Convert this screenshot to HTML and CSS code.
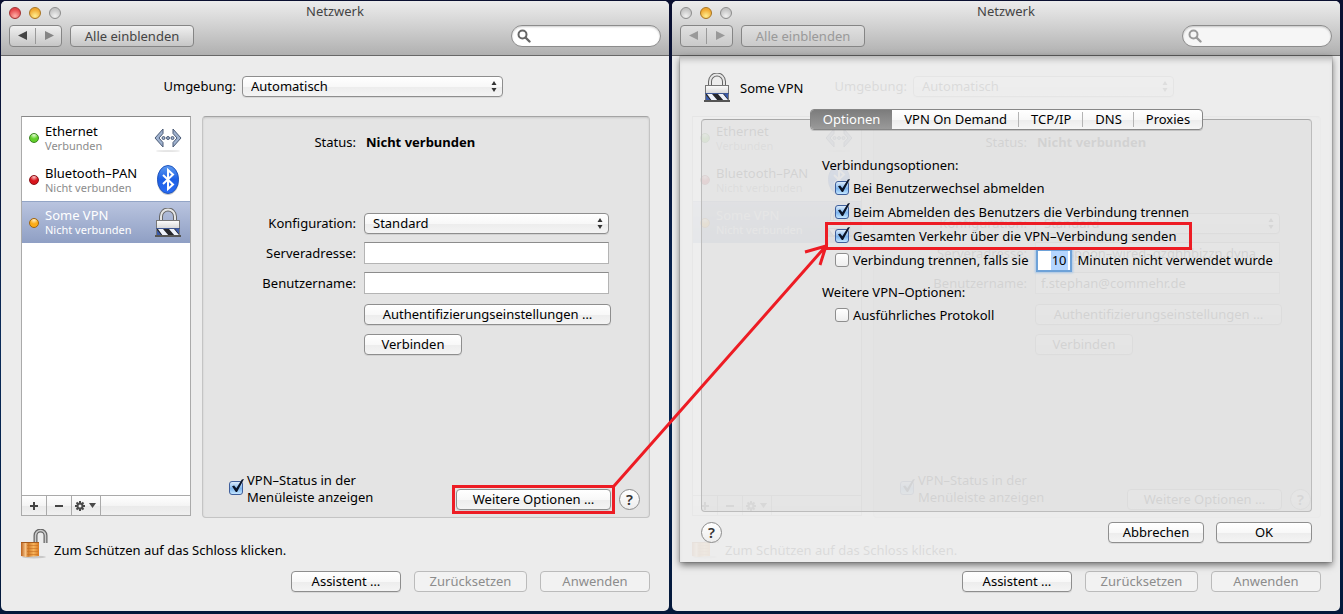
FILE: index.html
```html
<!DOCTYPE html>
<html lang="de">
<head>
    <meta charset="UTF-8">
    <meta name="viewport" content="width=device-width, initial-scale=1.0">
    <title>Netzwerk</title>
    <link rel="stylesheet" href="styles.css">
</head>
<body>
    <!-- shared icons -->
    <svg class="icon-defs" aria-hidden="true">
        <defs>
            <linearGradient id="metal" x1="0" y1="0" x2="0" y2="1">
                <stop offset="0" stop-color="#fdfdfd"/>
                <stop offset="1" stop-color="#b4b4b4"/>
            </linearGradient>
            <linearGradient id="blue" x1="0" y1="0" x2="0" y2="1">
                <stop offset="0" stop-color="#5f9cf0"/>
                <stop offset="0.5" stop-color="#1c5fe6"/>
                <stop offset="1" stop-color="#2a6cf4"/>
            </linearGradient>
            <linearGradient id="gold" x1="0" y1="0" x2="1" y2="0">
                <stop offset="0" stop-color="#b9601c"/>
                <stop offset="0.25" stop-color="#f8c487"/>
                <stop offset="0.4" stop-color="#d07a28"/>
                <stop offset="0.7" stop-color="#f7b45c"/>
                <stop offset="1" stop-color="#d9781f"/>
            </linearGradient>
        </defs>
        <symbol id="icon-ethernet" viewBox="0 0 30 30">
            <path d="M10 6L2 15l8 9v-4.500L6 15l4-4.500zM20 6l8 9-8 9v-4.500L24 15l-4-4.500z" fill="#9fb2cf" stroke="#4b5b76"/>
            <g fill="#9fb2cf" stroke="#4b5b76"><circle cx="10.500" cy="15" r="1.500"/><circle cx="15" cy="15" r="1.500"/><circle cx="19.500" cy="15" r="1.500"/></g>
            <ellipse cx="15" cy="28" rx="12" ry="1" fill="#000" opacity="0.1"/>
        </symbol>
        <symbol id="icon-bluetooth" viewBox="0 0 30 30">
            <ellipse cx="15" cy="15.500" rx="11" ry="14.500" fill="#999" opacity="0.5"/>
            <ellipse cx="15" cy="14.500" rx="10.500" ry="14" fill="url(#blue)" stroke="#1f55c0"/>
            <path d="M10 10l10 9.500-5 4.500V5l5 4.500L10 19" fill="none" stroke="#fff" stroke-width="2"/>
        </symbol>
        <symbol id="icon-vpn" viewBox="0 0 28 30">
            <path d="M7 13V8.500a7 7 0 0 1 14 0V13" fill="none" stroke="#666" stroke-width="4"/>
            <path d="M7 13V8.500a7 7 0 0 1 14 0V13" fill="none" stroke="#e6e6e6" stroke-width="2"/>
            <rect x="2.500" y="12.500" width="23" height="15" fill="url(#metal)" stroke="#777"/>
            <rect x="3" y="20" width="22" height="8" fill="#26272c"/>
            <path d="M4 21h5l6 7H9zM15 21h5l5 6v1h-4z" fill="#eef2fa"/>
            <path d="M3 22l5 6H3z" fill="#3c5cab"/>
            <path d="M21 21h4v5z" fill="#3c5cab"/>
            <path d="M2 20.500h24" stroke="#3e5792"/>
            <rect x="1" y="27" width="26" height="2" fill="#555"/>
        </symbol>
        <symbol id="icon-unlocked" viewBox="0 0 28 30">
            <ellipse cx="13" cy="28" rx="12" ry="1.500" fill="#000" opacity="0.15"/>
            <path d="M14.500 15V6.500a5 5 0 0 1 10 0V14" fill="none" stroke="#666" stroke-width="4"/>
            <path d="M14.500 15V6.500a5 5 0 0 1 10 0V14" fill="none" stroke="#ccc" stroke-width="1.500"/>
            <path d="M0 14l3-1h15v14l-13 1-5-1z" fill="url(#gold)"/>
            <path d="M6 16.500h11M6 19.500h11M6 22.500h11M6 25.500h11" stroke="#c76f22" opacity="0.6"/>
            <path d="M0 13.500h18" stroke="#a65a1b"/>
        </symbol>
        <symbol id="icon-search" viewBox="0 0 14 14">
            <circle cx="5.500" cy="5.500" r="4" fill="none" stroke="currentColor" stroke-width="2"/>
            <path d="M8.500 8.500l4 4" stroke="currentColor" stroke-width="2.400" stroke-linecap="round"/>
        </symbol>
        <symbol id="icon-updown" viewBox="0 0 6 12">
            <path d="M3 0l2.500 4h-5zM3 11L.5 7h5z" fill="currentColor"/>
        </symbol>
        <symbol id="icon-gear" viewBox="0 0 24 12">
            <path d="M6 1v10M1 6h10M2.500 2.500l7 7M9.500 2.500l-7 7" stroke="#4a4a4a" stroke-width="2"/>
            <circle cx="6" cy="6" r="2.500" fill="#f4f4f4" stroke="#4a4a4a" stroke-width="2"/>
            <path d="M15 3h7l-3.500 5z" fill="#4a4a4a"/>
        </symbol>
        <symbol id="icon-back" viewBox="0 0 10 10"><path d="M9 0v9L0 4.500z" fill="currentColor"/></symbol>
        <symbol id="icon-forward" viewBox="0 0 10 10"><path d="M1 0v9l9-4.500z" fill="currentColor"/></symbol>
    </svg>

    <div class="desktop">
        <!-- main window -->
        <section class="window">
            <header class="titlebar">
                <div class="title-row">
                    <button class="light light-red" aria-label="Schließen"></button>
                    <button class="light light-yellow" aria-label="Minimieren"></button>
                    <button class="light" aria-label="Zoomen"></button>
                    <h1>Netzwerk</h1>
                </div>
                <div class="toolbar">
                    <div class="nav">
                        <button aria-label="Zurück"><svg><use href="#icon-back"/></svg></button>
                        <button aria-label="Vorwärts" class="dim"><svg><use href="#icon-forward"/></svg></button>
                    </div>
                    <button class="show-all">Alle einblenden</button>
                    <label class="search"><svg><use href="#icon-search"/></svg><input type="search" aria-label="Suchen"></label>
                </div>
            </header>
            <main class="content">
                <div class="location">
                    <label for="location">Umgebung:</label>
                    <span class="select"><select id="location"><option>Automatisch</option></select><svg><use href="#icon-updown"/></svg></span>
                </div>
                <div class="columns">
                    <div class="sidebar">
                        <ul class="services">
                            <li><i class="dot dot-green"></i><div><b>Ethernet</b><small>Verbunden</small></div><svg><use href="#icon-ethernet"/></svg></li>
                            <li><i class="dot dot-red"></i><div><b>Bluetooth–PAN</b><small>Nicht verbunden</small></div><svg><use href="#icon-bluetooth"/></svg></li>
                            <li class="selected"><i class="dot dot-yellow"></i><div><b>Some VPN</b><small>Nicht verbunden</small></div><svg><use href="#icon-vpn"/></svg></li>
                        </ul>
                        <div class="list-actions">
                            <button aria-label="Hinzufügen"><span class="plus"></span></button>
                            <button aria-label="Entfernen"><span class="minus"></span></button>
                            <button class="gear" aria-label="Aktionen"><svg><use href="#icon-gear"/></svg></button>
                        </div>
                    </div>
                    <div class="panel">
                        <div class="status"><span>Status:</span><strong>Nicht verbunden</strong></div>
                        <div class="fields">
                            <label for="config">Konfiguration:</label>
                            <span class="select"><select id="config"><option>Standard</option></select><svg><use href="#icon-updown"/></svg></span>
                            <label for="server">Serveradresse:</label>
                            <input type="text" id="server">
                            <label for="user">Benutzername:</label>
                            <input type="text" id="user">
                        </div>
                        <div class="field-buttons">
                            <button class="button auth">Authentifizierungseinstellungen …</button>
                            <button class="button">Verbinden</button>
                        </div>
                        <div class="panel-footer">
                            <input type="checkbox" id="menubar" checked>
                            <label for="menubar">VPN–Status in der<br>Menüleiste anzeigen</label>
                            <span class="more marked"><button class="button">Weitere Optionen …</button></span>
                            <button class="help" aria-label="Hilfe">?</button>
                        </div>
                    </div>
                </div>
                <div class="lock-row"><svg><use href="#icon-unlocked"/></svg><span>Zum Schützen auf das Schloss klicken.</span></div>
                <div class="actions">
                    <button class="button">Assistent …</button>
                    <button class="button" disabled>Zurücksetzen</button>
                    <button class="button" disabled>Anwenden</button>
                </div>
            </main>
        </section>

        <!-- window with the options sheet -->
        <section class="window blocked">
            <header class="titlebar">
                <div class="title-row">
                    <button class="light" aria-label="Schließen"></button>
                    <button class="light light-yellow" aria-label="Minimieren"></button>
                    <button class="light" aria-label="Zoomen"></button>
                    <h1>Netzwerk</h1>
                </div>
                <div class="toolbar">
                    <div class="nav">
                        <button aria-label="Zurück" disabled><svg><use href="#icon-back"/></svg></button>
                        <button aria-label="Vorwärts" disabled><svg><use href="#icon-forward"/></svg></button>
                    </div>
                    <button class="show-all" disabled>Alle einblenden</button>
                    <label class="search"><svg><use href="#icon-search"/></svg><input type="search" aria-label="Suchen" disabled></label>
                </div>
            </header>
            <div class="sheet-area">
                <main class="content" inert>
                    <div class="location">
                        <label for="location2">Umgebung:</label>
                        <span class="select"><select id="location2"><option>Automatisch</option></select><svg><use href="#icon-updown"/></svg></span>
                    </div>
                    <div class="columns">
                        <div class="sidebar">
                            <ul class="services">
                                <li><i class="dot dot-green"></i><div><b>Ethernet</b><small>Verbunden</small></div><svg><use href="#icon-ethernet"/></svg></li>
                                <li><i class="dot dot-red"></i><div><b>Bluetooth–PAN</b><small>Nicht verbunden</small></div><svg><use href="#icon-bluetooth"/></svg></li>
                                <li class="selected"><i class="dot dot-yellow"></i><div><b>Some VPN</b><small>Nicht verbunden</small></div><svg><use href="#icon-vpn"/></svg></li>
                            </ul>
                            <div class="list-actions">
                                <button aria-label="Hinzufügen"><span class="plus"></span></button>
                                <button aria-label="Entfernen"><span class="minus"></span></button>
                                <button class="gear" aria-label="Aktionen"><svg><use href="#icon-gear"/></svg></button>
                            </div>
                        </div>
                        <div class="panel">
                            <div class="status"><span>Status:</span><strong>Nicht verbunden</strong></div>
                            <div class="fields">
                                <label for="config2">Konfiguration:</label>
                                <span class="select"><select id="config2"><option>Standard</option></select><svg><use href="#icon-updown"/></svg></span>
                                <label for="server2">Serveradresse:</label>
                                <input type="text" id="server2" value="greyspoon–wired–gzghhbjzzn.dyna">
                                <label for="user2">Benutzername:</label>
                                <input type="text" id="user2" value="f.stephan@commehr.de">
                            </div>
                            <div class="field-buttons">
                                <button class="button auth">Authentifizierungseinstellungen …</button>
                                <button class="button">Verbinden</button>
                            </div>
                            <div class="panel-footer">
                                <input type="checkbox" id="menubar2" checked>
                                <label for="menubar2">VPN–Status in der<br>Menüleiste anzeigen</label>
                                <span class="more"><button class="button">Weitere Optionen …</button></span>
                                <button class="help" aria-label="Hilfe">?</button>
                            </div>
                        </div>
                    </div>
                    <div class="lock-row"><svg><use href="#icon-unlocked"/></svg><span>Zum Schützen auf das Schloss klicken.</span></div>
                    <div class="actions">
                        <button class="button">Assistent …</button>
                        <button class="button" disabled>Zurücksetzen</button>
                        <button class="button" disabled>Anwenden</button>
                    </div>
                </main>

                <div class="sheet" role="dialog" aria-label="Some VPN">
                    <div class="sheet-head"><svg><use href="#icon-vpn"/></svg><span>Some VPN</span></div>
                    <div class="tabs" role="tablist">
                        <button role="tab" class="active" aria-selected="true">Optionen</button>
                        <button role="tab">VPN On Demand</button>
                        <button role="tab">TCP/IP</button>
                        <button role="tab">DNS</button>
                        <button role="tab">Proxies</button>
                    </div>
                    <div class="options">
                        <h2>Verbindungsoptionen:</h2>
                        <div class="option"><input type="checkbox" id="opt1" checked><label for="opt1">Bei Benutzerwechsel abmelden</label></div>
                        <div class="option"><input type="checkbox" id="opt2" checked><label for="opt2">Beim Abmelden des Benutzers die Verbindung trennen</label></div>
                        <div class="option marked"><input type="checkbox" id="opt3" checked><label for="opt3">Gesamten Verkehr über die VPN–Verbindung senden</label></div>
                        <div class="option">
                            <input type="checkbox" id="opt4"><label for="opt4">Verbindung trennen, falls sie</label>
                            <span class="minutes"><input type="text" id="minutes" value="10"></span>
                            <label for="minutes">Minuten nicht verwendet wurde</label>
                        </div>
                        <h2>Weitere VPN–Optionen:</h2>
                        <div class="option"><input type="checkbox" id="opt5"><label for="opt5">Ausführliches Protokoll</label></div>
                    </div>
                    <div class="sheet-footer">
                        <button class="help" aria-label="Hilfe">?</button>
                        <button class="button">Abbrechen</button>
                        <button class="button">OK</button>
                    </div>
                </div>
            </div>
        </section>

        <svg class="arrow" aria-hidden="true">
            <path d="M614 486L826 246M805 252L826 246L820 265" fill="none" stroke="#ed1c24" stroke-width="3"/>
        </svg>
    </div>
</body>
</html>
```
FILE: styles.css
```css
* {
    box-sizing: border-box;
}
body {
    margin: 0;
    font-family: "Noto Sans", "Open Sans", sans-serif;
    font-size: 13px;
    line-height: 17px;
    color: #000;
}
button, input, select {
    font: inherit;
    color: inherit;
    margin: 0;
    padding: 0;
}
h1, h2 {
    margin: 0;
    font-size: 13px;
    font-weight: normal;
}
.icon-defs {
    position: absolute;
    width: 0;
    height: 0;
}
.desktop {
    position: relative;
    display: flex;
    gap: 3px;
    min-height: 100vh;
    padding: 1px 3px 3px 1px;
    background: linear-gradient(#0a0f30, #0a1a40 30%, #0b2c5a 55%, #03204a 80%, #04183a);
}
.window {
    flex: 1;
    display: flex;
    flex-direction: column;
    background: #ececec;
    border-radius: 5px;
}

/* title bar */
.titlebar {
    padding: 0 8px 8px;
    background: linear-gradient(#ececec, #cfcfcf 50%, #b0b0b0);
    border-bottom: 1px solid #686868;
    border-radius: 5px 5px 0 0;
}
.title-row {
    position: relative;
    display: flex;
    align-items: center;
    gap: 8px;
    height: 24px;
}
.title-row h1 {
    position: absolute;
    left: 0;
    right: 0;
    top: 2px;
    text-align: center;
    color: #444;
    pointer-events: none;
}
.light {
    width: 12px;
    height: 12px;
    border: 1px solid #8c8c8c;
    border-radius: 50%;
    background: radial-gradient(circle at 50% 80%, #f0f0f0, #c4c4c4 70%);
}
.light-red {
    border-color: #a03030;
    background: radial-gradient(circle at 50% 80%, #ffb0a8, #e4464a 70%);
}
.light-yellow {
    border-color: #a87420;
    background: radial-gradient(circle at 50% 80%, #ffee90, #f0a830 70%);
}
.toolbar {
    display: flex;
    gap: 8px;
}
.nav, .show-all {
    height: 22px;
    border: 1px solid #858585;
    border-radius: 4px;
    background: linear-gradient(#f0f0f0, #c6c6c6);
    color: #444;
}
.nav {
    display: flex;
    width: 53px;
    padding: 2px 0;
}
.nav button {
    flex: 1;
    display: flex;
    align-items: center;
    justify-content: center;
    border: 0;
    background: none;
}
.nav button + button {
    border-left: 1px solid #999;
}
.nav svg {
    width: 10px;
    height: 10px;
}
.nav .dim {
    color: #858585;
}
.show-all {
    width: 124px;
}
.search {
    display: flex;
    align-items: center;
    gap: 4px;
    width: 150px;
    height: 22px;
    margin-left: auto;
    padding: 0 5px;
    border: 1px solid #8c8c8c;
    border-radius: 11px;
    background: #fff;
    box-shadow: inset 0 1px 2px rgba(0, 0, 0, 0.2);
    color: #666;
}
.search svg {
    flex: none;
    width: 14px;
    height: 14px;
}
.search input {
    flex: 1;
    min-width: 0;
    border: 0;
    outline: 0;
    background: none;
}
.blocked .nav, .blocked .show-all {
    background: linear-gradient(#e0e0e0, #cacaca);
    color: #999;
}
.blocked .search {
    background: #f6f6f6;
    color: #999;
}

/* window content */
.content {
    flex: 1;
    display: flex;
    flex-direction: column;
    padding: 20px 19px 19px 20px;
}
.location {
    display: grid;
    grid-template-columns: 215px 261px;
    column-gap: 6px;
    text-align: right;
    align-items: center;
    margin-bottom: 19px;
}
.select {
    position: relative;
    display: block;
    height: 21px;
}
.select select {
    display: block;
    width: 100%;
    height: 21px;
    padding: 0 20px 0 8px;
    appearance: none;
}
.select svg {
    position: absolute;
    right: 6px;
    top: 5px;
    width: 6px;
    height: 12px;
    color: #333;
    pointer-events: none;
}
.button, .select select {
    border: 1px solid #8e8e8e;
    border-radius: 4px;
    background: linear-gradient(#fff, #f8f8f8 50%, #ededed 55%, #f4f4f4);
    box-shadow: 0 1px 0 rgba(0, 0, 0, 0.08);
}
.button {
    width: 110px;
    height: 21px;
    line-height: 19px;
    white-space: nowrap;
}
.button:disabled {
    border-color: #bbb;
    background: #f2f2f2;
    box-shadow: none;
    color: #8c8c8c;
}
.columns {
    flex: 1;
    display: flex;
    gap: 11px;
}
.sidebar {
    flex: none;
    display: flex;
    flex-direction: column;
    width: 170px;
    margin-bottom: 2px;
    border: 1px solid #aaa;
    border-top-color: #888;
    background: #fff;
}
.services {
    flex: 1;
    margin: 0;
    padding: 0;
    list-style: none;
}
.services li {
    display: flex;
    align-items: center;
    height: 42px;
    padding: 0 7px;
}
.services li div {
    flex: 1;
    padding-left: 6px;
    white-space: nowrap;
}
.services b, .services small {
    display: block;
    font-weight: normal;
    line-height: 15px;
}
.services small {
    font-size: 11px;
    line-height: 14px;
    color: #8c8c8c;
}
.services svg {
    flex: none;
    width: 30px;
    height: 30px;
}
.services .selected {
    border-top: 1px solid #93a5c6;
    background: linear-gradient(#b9c4df, #8f9fc4);
}
.services .selected, .services .selected small {
    color: #fff;
}
.dot {
    flex: none;
    width: 10px;
    height: 10px;
    border: 1px solid;
    border-radius: 50%;
}
.dot-green {
    border-color: #3b8420;
    background: radial-gradient(circle at 50% 10%, #e8ffd8, #62d02a 50%);
}
.dot-red {
    border-color: #8a1015;
    background: radial-gradient(circle at 50% 10%, #ffd0d0, #d8141c 50%);
}
.dot-yellow {
    border-color: #a2640c;
    background: radial-gradient(circle at 50% 10%, #fff0c8, #fbac18 50%);
}
.list-actions {
    display: flex;
    height: 20px;
    border-top: 1px solid #aaa;
    background: linear-gradient(#fff, #f4f4f4 50%, #eaeaea 55%, #f0f0f0);
}
.list-actions button {
    display: flex;
    align-items: center;
    justify-content: center;
    width: 25px;
    border: 0;
    border-right: 1px solid #aaa;
    background: none;
}
.list-actions .gear {
    width: 29px;
}
.list-actions svg {
    width: 24px;
    height: 12px;
}
.plus, .minus {
    width: 8px;
    height: 8px;
    background: linear-gradient(#444, #444) center / 8px 2px no-repeat;
}
.plus {
    background: linear-gradient(#444, #444) center / 8px 2px no-repeat, linear-gradient(#444, #444) center / 2px 8px no-repeat;
}
.panel {
    flex: 1;
    display: flex;
    flex-direction: column;
    padding: 17px 9px 7px 0;
    border: 1px solid #c4c4c4;
    border-top-color: #a4a4a4;
    border-radius: 4px;
    background: #e4e4e4;
    box-shadow: inset 0 1px 2px rgba(0, 0, 0, 0.12);
}
.status, .fields {
    display: grid;
    grid-template-columns: 153px 245px;
    column-gap: 8px;
    align-items: center;
}
.status span, .fields label {
    text-align: right;
}
.status strong {
    padding-left: 2px;
}
.fields {
    grid-auto-rows: 30px;
    margin-top: 57px;
}
.fields input {
    height: 22px;
    padding: 0 5px;
    border: 1px solid #b4b4b4;
    border-top-color: #8c8c8c;
    background: #fff;
}
.field-buttons {
    display: flex;
    flex-direction: column;
    gap: 9px;
    margin: 6px 0 0 161px;
}
.field-buttons .button {
    width: 98px;
}
.field-buttons .auth {
    width: 247px;
}
.panel-footer {
    display: flex;
    align-items: flex-end;
    gap: 4px;
    margin-top: auto;
    padding-left: 26px;
}
.panel-footer .help {
    margin-left: 4px;
}
.panel-footer label {
    margin-bottom: 4px;
}
.panel-footer input {
    margin-bottom: 15px;
}
.more {
    display: flex;
    width: 155px;
    margin-left: auto;
}
.more .button {
    flex: 1;
}
.marked {
    outline: 3px solid #ed1c24;
}
.more.marked {
    outline-offset: 1px;
}
.help {
    flex: none;
    width: 21px;
    height: 21px;
    border: 1px solid #8c8c8c;
    border-radius: 50%;
    background: linear-gradient(#fff, #ededed);
    font-size: 15px;
    font-weight: 600;
    line-height: 19px;
    color: #333;
}
.lock-row {
    display: flex;
    align-items: center;
    gap: 5px;
    height: 30px;
    margin: 11px 0 12px;
}
.lock-row svg {
    width: 28px;
    height: 30px;
}
.lock-row span {
    padding-top: 12px;
}
.actions {
    display: flex;
    justify-content: flex-end;
    gap: 13px;
}
.actions .button:nth-child(2) {
    width: 113px;
}

/* check boxes */
input[type="checkbox"] {
    position: relative;
    flex: none;
    width: 14px;
    height: 14px;
    appearance: none;
    border: 1px solid #8e8e8e;
    border-radius: 3px;
    background: linear-gradient(#fff, #eee);
}
input[type="checkbox"]:checked {
    border-color: #3f5f9c;
    background: linear-gradient(#dcebfb, #7fb6ee 55%, #c4e6ff);
}
input[type="checkbox"]:checked::after {
    content: "";
    position: absolute;
    left: 2px;
    top: -3px;
    width: 12px;
    height: 13px;
    background: #0b1428;
    clip-path: polygon(0 55%, 18% 50%, 36% 72%, 82% 4%, 100% 0, 42% 100%, 32% 100%);
}

/* options sheet */
.sheet-area {
    position: relative;
    flex: 1;
    display: flex;
    flex-direction: column;
}
.sheet {
    position: absolute;
    inset: 0 8px 49px;
    display: flex;
    flex-direction: column;
    padding: 17px 20px 19px 21px;
    background: rgba(237, 237, 237, 0.92);
    box-shadow: 0 3px 7px rgba(0, 0, 0, 0.55), 0 0 1px rgba(0, 0, 0, 0.6), inset 0 7px 6px -4px rgba(0, 0, 0, 0.25);
}
.sheet-head {
    display: flex;
    align-items: center;
    gap: 9px;
    padding-left: 2px;
}
.sheet-head svg {
    width: 28px;
    height: 30px;
}
.tabs {
    position: relative;
    display: flex;
    align-self: center;
    margin-top: 6px;
    height: 21px;
    border: 1px solid #868686;
    border-radius: 4px;
    background: linear-gradient(#fff, #f8f8f8 50%, #ededed 55%, #f6f6f6);
    box-shadow: 0 1px 0 rgba(0, 0, 0, 0.15);
}
.tabs button {
    border: 0;
    padding: 0 12px;
    line-height: 19px;
    background: linear-gradient(#b4b4b4, #b4b4b4) right / 1px 15px no-repeat;
}
.tabs button:last-child {
    background: none;
}
.tabs .active {
    border-radius: 3px 0 0 3px;
    background: linear-gradient(#7c7c7c, #9a9a9a);
    color: #fff;
}
.options {
    flex: 1;
    margin-top: -11px;
    padding: 37px 20px 0 120px;
    border: 1px solid #bcbcbc;
    border-top-color: #a8a8a8;
    border-radius: 4px;
    background: rgba(0, 0, 0, 0.035);
}
.options h2 + .option {
    margin-top: 2px;
}
.option + h2 {
    margin-top: 12px;
}
.option {
    display: flex;
    align-items: center;
    gap: 4px;
    width: max-content;
    height: 24px;
    padding-left: 13px;
    white-space: nowrap;
}
.option.marked {
    margin-left: 5px;
    padding: 0 14px 0 8px;
    outline-offset: -1px;
}
.minutes {
    margin: 0 4px 0 5px;
}
.minutes input {
    display: block;
    width: 32px;
    height: 19px;
    padding-right: 3px;
    border: 0;
    outline: 0;
    background: linear-gradient(#b4d5ff, #b4d5ff) right 2px center / 17px 19px no-repeat #fff;
    box-shadow: 0 0 0 2px #6ea2d8, 0 0 2px 3px #a9c8e8;
    text-align: right;
}
.sheet-footer {
    display: flex;
    gap: 12px;
    margin-top: 10px;
}
.sheet-footer .help {
    margin-right: auto;
}
.sheet-footer .button {
    width: 96px;
}

/* hint arrow from the button to the option */
.arrow {
    position: absolute;
    left: 0;
    top: 0;
    width: 100%;
    height: 100%;
    pointer-events: none;
}
```
